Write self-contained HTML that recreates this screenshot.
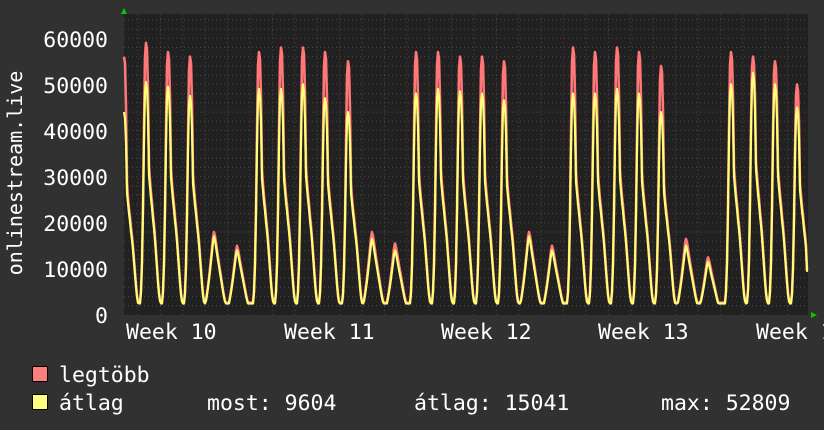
<!DOCTYPE html>
<html><head><meta charset="utf-8"><style>
html,body{margin:0;padding:0;background:#313131;}
body{width:824px;height:430px;overflow:hidden;position:relative;font-family:"DejaVu Sans Mono","Liberation Mono",monospace;color:#fff;}
.t{position:absolute;font-size:21.5px;line-height:1;white-space:pre;}
.box{position:absolute;width:14px;height:14px;border:1px solid #000;}
</style></head><body>
<svg id="g" width="824" height="430" style="position:absolute;left:0;top:0">
<rect x="124" y="14" width="684" height="301" fill="#212121"/>
<g id="grid"></g>
<polyline id="red" fill="none" stroke="#ff7777" stroke-width="2.6" stroke-linejoin="round"/>
<polyline id="yel" fill="none" stroke="#ffff77" stroke-width="2.2" stroke-linejoin="round"/>
<polygon points="121,14 127,14 124,8" fill="#00cc00"/>
<polygon points="811,312 811,318 817,315" fill="#00cc00"/>
<text x="22" y="173" transform="rotate(-90 22 173)" text-anchor="middle" fill="#fff" font-size="20" font-family="DejaVu Sans Mono, Liberation Mono, monospace">onlinestream.live</text>
</svg>
<div class="t" style="right:716px;top:30px">60000</div>
<div class="t" style="right:716px;top:76px">50000</div>
<div class="t" style="right:716px;top:122px">40000</div>
<div class="t" style="right:716px;top:168px">30000</div>
<div class="t" style="right:716px;top:214px">20000</div>
<div class="t" style="right:716px;top:260px">10000</div>
<div class="t" style="right:716px;top:306px">0</div>
<div class="t" style="left:126px;top:322px">Week 10</div>
<div class="t" style="left:284px;top:322px">Week 11</div>
<div class="t" style="left:441px;top:322px">Week 12</div>
<div class="t" style="left:598px;top:322px">Week 13</div>
<div class="t" style="left:756px;top:322px">Week 1</div>
<div class="box" style="left:32px;top:366px;background:#ff7f7f"></div>
<div class="box" style="left:32px;top:394px;background:#ffff7f"></div>
<div class="t" style="left:59px;top:365px">legtöbb</div>
<div class="t" style="left:59px;top:393px">átlag</div>
<div class="t" style="left:207px;top:393px">most: 9604</div>
<div class="t" style="left:414px;top:393px">átlag: 15041</div>
<div class="t" style="left:661px;top:393px">max: 52809</div>
<script>
var Y=function(v){return 315-v*0.004612;};
var gr='';
for(var v=2000;v<=64000;v+=2000){var y=Y(v).toFixed(1);var maj=v%10000==0;
gr+='<line x1="124" x2="808" y1="'+y+'" y2="'+y+'" stroke="'+(maj?'#6a3535':'#4a4a4a')+'" stroke-dasharray="1,3"/>';}
for(var x=138;x<808;x+=22.4){var wk=Math.abs(((x-250.6)/156.8)-Math.round((x-250.6)/156.8))<0.02;
gr+='<line y1="14" y2="315" x1="'+x.toFixed(1)+'" x2="'+x.toFixed(1)+'" stroke="'+(wk?'#6a3535':'#4a4a4a')+'" stroke-dasharray="1,3"/>';}
document.getElementById('grid').innerHTML=gr;
var P=[[124,56000,44000],[146,59000,50500],[168,57000,49500],[190,56000,47500],[214,18000,17000,1],[237,15000,14000,1],
[259,57000,49000],[281,58000,49000],[303,58000,50000],[325,57000,47000],[348,55000,44000],[372,18000,16500,1],[395,15500,14000,1],
[416,57000,48000],[438,57000,49000],[460,56000,48500],[482,56000,48000],[504,55000,46500],[529,18000,17000,1],[552,15000,14000,1],
[573,58000,48000],[595,57000,48000],[617,58000,49000],[639,57000,48000],[661,54000,44000],[686,16500,15000,1],[708,12500,11500,1],
[731,57000,50000],[753,56000,52500],[775,55000,50000],[797,50000,45000]];
var T={'-6':0.05,'-5':0.1,'-4':0.22,'-3':0.45,'-2':0.75,'-1':0.96,'0':1,'1':0.97,'2':0.85,'3':0.6,'4':0.55,'5':0.5,'6':0.46,'7':0.41,'8':0.37,'9':0.32,'10':0.26,'11':0.2,'12':0.14,'13':0.09,'14':0.06,'15':0.04};
var S={'-9':0.12,'-8':0.18,'-7':0.26,'-6':0.35,'-5':0.45,'-4':0.56,'-3':0.68,'-2':0.8,'-1':0.93,'0':1,'1':0.95,'2':0.87,'3':0.78,'4':0.7,'5':0.62,'6':0.54,'7':0.46,'8':0.38,'9':0.3,'10':0.23,'11':0.17,'12':0.13};
function shape(d,H,small){var t=small?S:T;var v=t[d];return v?H*v:0;}
var PW={'-2':0.2,'-1':0.85,'0':1,'1':1,'2':0.6,'3':0.1};
var r=[],yl=[];
for(var x=124;x<=808;x++){var mr=2700,my=2500;
 for(var i=0;i<P.length;i++){var p=P[i];var d=x-p[0];
  var yv=shape(d,p[2],p[3]);
  var rv=yv*1.05+(p[3]?0:(p[1]-p[2]*1.05)*(PW[d]||0));
  if(p[3])rv=shape(d,p[1],1);
  mr=Math.max(mr,rv);my=Math.max(my,yv);}
 if(x>=807){mr=my=9600;}
 r.push(x+','+Y(mr).toFixed(1));yl.push(x+','+Y(my).toFixed(1));}
document.getElementById('red').setAttribute('points',r.join(' '));
document.getElementById('yel').setAttribute('points',yl.join(' '));
</script>
</body></html>
